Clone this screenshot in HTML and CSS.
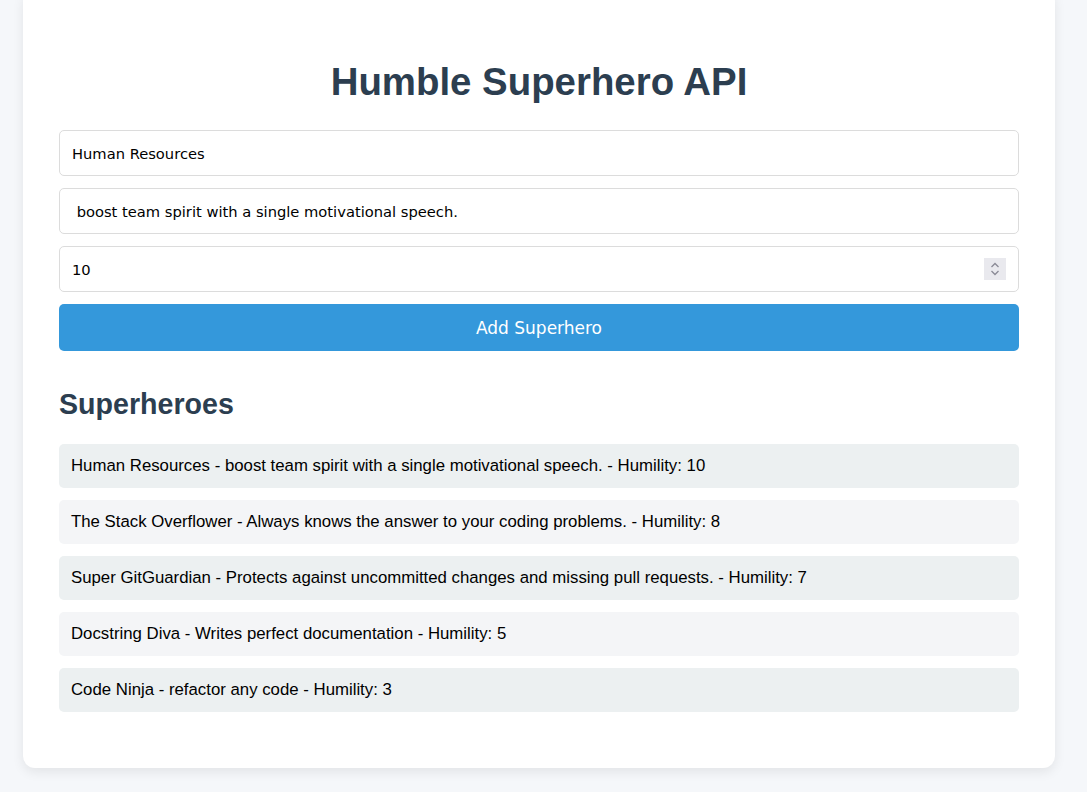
FILE: index.html
```html
<!DOCTYPE html>
<html lang="en">
<head>
<meta charset="utf-8">
<title>Humble Superhero API</title>
<link rel="stylesheet" href="styles.css">
</head>
<body>
<main class="card">
  <h1 class="title">Humble Superhero API</h1>
  <form class="hero-form">
    <input class="field" type="text" value="Human Resources">
    <input class="field" type="text" value=" boost team spirit with a single motivational speech.">
    <div class="number-wrap">
      <input class="field" type="text" value="10">
      <span class="spinner">
        <svg width="22" height="22" viewBox="0 0 22 22"><path d="M7.5 9 L11 5.5 L14.5 9" fill="none" stroke="#8a8a96" stroke-width="1.3"/><path d="M7.5 13 L11 16.5 L14.5 13" fill="none" stroke="#8a8a96" stroke-width="1.3"/></svg>
      </span>
    </div>
    <button class="submit" type="button">Add Superhero</button>
  </form>
  <h2 class="subtitle">Superheroes</h2>
  <ul class="hero-list">
    <li class="hero">Human Resources - boost team spirit with a single motivational speech. - Humility: 10</li>
    <li class="hero">The Stack Overflower - Always knows the answer to your coding problems. - Humility: 8</li>
    <li class="hero">Super GitGuardian - Protects against uncommitted changes and missing pull requests. - Humility: 7</li>
    <li class="hero">Docstring Diva - Writes perfect documentation - Humility: 5</li>
    <li class="hero">Code Ninja - refactor any code - Humility: 3</li>
  </ul>
</main>
</body>
</html>
```
FILE: styles.css
```css
html, body {
  margin: 0;
  padding: 0;
  background: #f5f7fa;
  font-family: "Liberation Sans", Arial, sans-serif;
}
body {
  padding: 0 32px 24px 23px;
}
.card {
  margin-top: -10px;
  background: #fff;
  border-radius: 12px;
  box-shadow: 0 4px 12px rgba(0, 0, 0, 0.08);
  padding: 70px 36px 56px;
}
.title {
  margin: 0 0 26px;
  text-align: center;
  color: #2c3e50;
  font-size: 38.4px;
  line-height: 44px;
  font-weight: bold;
}
.hero-form {
  display: flex;
  flex-direction: column;
  gap: 12px;
}
.field {
  box-sizing: border-box;
  width: 100%;
  height: 46px;
  margin: 0;
  padding: 0 12px;
  border: 1px solid #dcdcdc;
  border-radius: 5px;
  background: #fff;
  font-family: "DejaVu Sans", Tahoma, sans-serif;
  font-size: 14.7px;
  color: #000;
  outline: none;
}
.number-wrap {
  position: relative;
}
.spinner {
  position: absolute;
  right: 13px;
  top: 12px;
  width: 22px;
  height: 22px;
  background: #e9e9ee;
  display: block;
}
.spinner svg { display: block; }
.submit {
  height: 47px;
  border: none;
  border-radius: 5px;
  background: #3498db;
  color: #fff;
  font-family: "DejaVu Sans", Tahoma, sans-serif;
  font-size: 17px;
  cursor: pointer;
}
.subtitle {
  margin: 36px 0 23px;
  color: #2c3e50;
  font-size: 28.6px;
  line-height: 34px;
  font-weight: bold;
}
.hero-list {
  list-style: none;
  margin: 0;
  padding: 0;
  display: flex;
  flex-direction: column;
  gap: 12px;
}
.hero {
  height: 44px;
  box-sizing: border-box;
  padding: 0 12px;
  display: flex;
  align-items: center;
  border-radius: 5px;
  background: #ecf0f1;
  font-size: 16.8px;
  color: #000;
}
.hero:nth-child(even) {
  background: #f4f5f7;
}
```
